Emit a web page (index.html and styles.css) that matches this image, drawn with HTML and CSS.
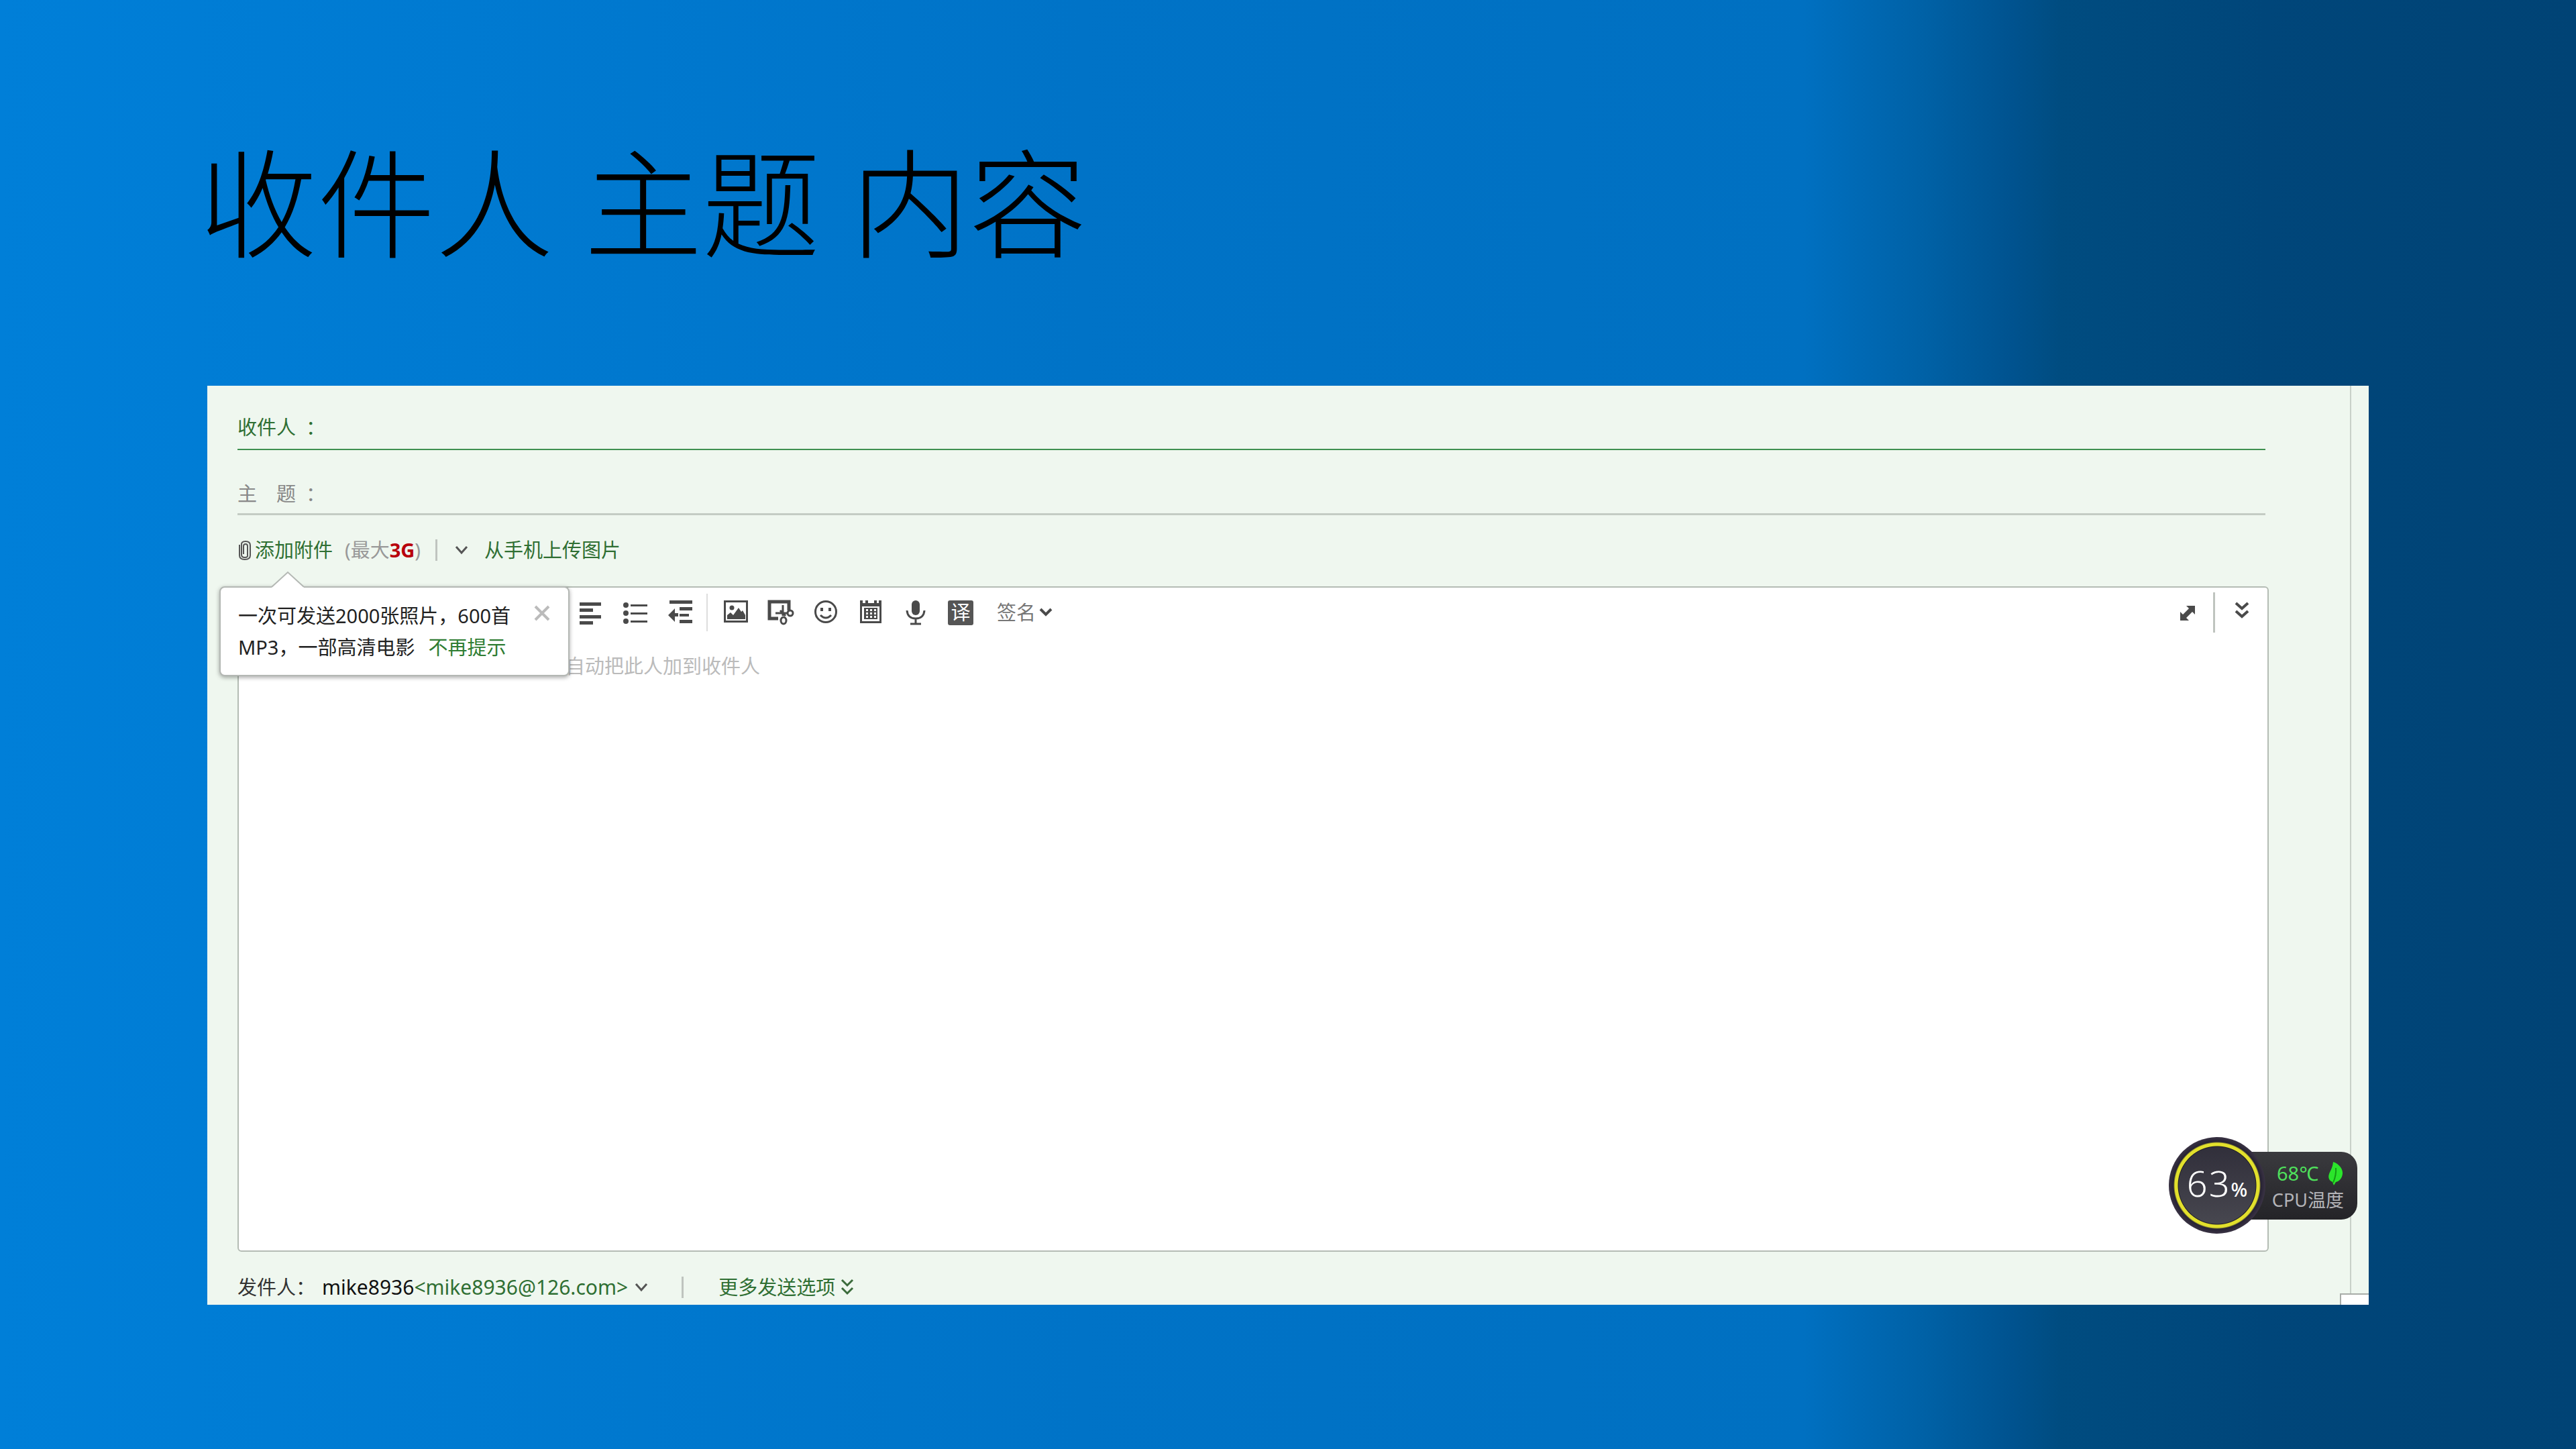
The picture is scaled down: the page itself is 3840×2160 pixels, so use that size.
FILE: index.html
```html
<!DOCTYPE html>
<html lang="zh-CN">
<head>
    <meta charset="UTF-8">
    <meta name="viewport" content="width=device-width, initial-scale=1.0">
    <title>收件人 主题 内容</title>
    <link rel="stylesheet" href="styles.css">
</head>
<body>
    <main class="slide">
        <h1 class="titulo">收件人 主题 内容</h1>

        <section class="panel">
            <form class="compose">
                <div class="field field-to">
                    <label for="to">收件人&nbsp; ：</label>
                    <input id="to" type="text">
                </div>
                <div class="field field-subject">
                    <label for="subject">主　题&nbsp; ：</label>
                    <input id="subject" type="text">
                </div>

                <div class="attach">
                    <button type="button" class="link-btn attach-btn">
                        <svg width="22" height="32" viewBox="0 0 22 32" fill="none" stroke="#555" stroke-width="2"><path d="M3 8v16q0 6 8 6t8-6V9q0-6-7-6T6 9v14q0 4 5 4t4-4V10q0-3-3-3t-3 3v12"/></svg>
                        <span>添加附件</span>
                    </button>
                    <span class="limit">(最大<b>3G</b>)</span>
                    <span class="divider divider-short"></span>
                    <button type="button" class="link-btn" aria-label="更多">
                        <svg width="20" height="14" viewBox="0 0 20 14" fill="none" stroke="#555" stroke-width="3"><path d="M2 2l8 9 8-9"/></svg>
                    </button>
                    <a class="phone" href="#">从手机上传图片</a>

                    <!-- aviso flotante -->
                    <div class="tip">
                        <svg class="tip-arrow" width="50" height="26" viewBox="0 0 50 26"><path d="M1 26V24L25 2l24 22v2z" fill="#fff"/><path d="M1 24L25 2l24 22" fill="none" stroke="#b4b8b4" stroke-width="2"/></svg>
                        <p>一次可发送2000张照片，600首<br>MP3，一部高清电影<a href="#">不再提示</a></p>
                        <button type="button" class="tip-close" aria-label="关闭">
                            <svg width="24" height="24" viewBox="0 0 24 24" stroke="#bbb" stroke-width="4"><path d="M2 2l20 20M22 2L2 22"/></svg>
                        </button>
                    </div>
                </div>

                <div class="editor">
                    <div class="toolbar">
                        <button type="button" aria-label="对齐"><svg viewBox="0 0 40 40" fill="#4a4a4a"><path d="M4 5h32v5H4zM4 14h20v5H4zM4 24h32v5H4zM4 33h20v5H4z"/></svg></button>
                        <button type="button" aria-label="列表"><svg viewBox="0 0 40 40" fill="#4a4a4a"><circle cx="6" cy="9" r="4"/><circle cx="6" cy="21" r="4"/><circle cx="6" cy="33" r="4"/><path d="M13 8h25v3H13zM13 20h25v3H13zM13 32h25v3H13z"/></svg></button>
                        <button type="button" aria-label="缩进"><svg viewBox="0 0 40 40" fill="#4a4a4a"><path d="M4 2h34v5H4zM19 12h19v5H19zM19 22h14v4H19zM19 31h19v5H19zM2 24l10-10v7h5v5h-5v8z"/></svg></button>
                        <span class="divider divider-tool"></span>
                        <button type="button" aria-label="图片"><svg viewBox="0 0 40 40"><path d="M3.500 3.500h33v30h-33z" fill="none" stroke="#4a4a4a" stroke-width="3"/><circle cx="14" cy="13" r="3.500" fill="#4a4a4a"/><path d="M7 30v-6l5-4 4 4 8-11 4 6 2-2 4 7v6z" fill="#4a4a4a"/></svg></button>
                        <button type="button" aria-label="截图"><svg viewBox="0 0 40 40" fill="none" stroke="#4a4a4a"><path d="M16 29H3V4h29v13" stroke-width="5"/><path d="M23 9v16M12 21h18M19 17l8 8" stroke-width="3"/><circle cx="34" cy="21" r="4" stroke-width="3"/><ellipse cx="24" cy="32" rx="4" ry="5" stroke-width="3"/></svg></button>
                        <button type="button" aria-label="表情"><svg viewBox="0 0 40 40" fill="none" stroke="#4a4a4a" stroke-width="3"><circle cx="20" cy="19" r="15.500"/><path d="M12 24q8 8 16 0"/><path d="M14 13v5M26 13v5" stroke-width="4"/></svg></button>
                        <button type="button" aria-label="日历"><svg viewBox="0 0 40 40"><path d="M4 2h4v4h4V2h4v4h9V2h4v4h3V2h4v34H4z" fill="#4a4a4a"/><path d="M7 11h26v22H7z" fill="#fff"/><path d="M10 13h20v17H10z" fill="#4a4a4a"/><path d="M13 15h3v3h-3zM19 15h3v3h-3zM25 15h3v3h-3zM13 20h3v3h-3zM19 20h3v3h-3zM25 20h3v3h-3zM13 25h3v3h-3zM19 25h3v3h-3zM25 25h3v3h-3z" fill="#fff"/></svg></button>
                        <button type="button" aria-label="语音"><svg viewBox="0 0 40 40"><rect x="14" y="2" width="12" height="22" rx="6" fill="#4a4a4a"/><path d="M7 17q1 12 13 12t13-12M20 29v8M12 37h16" fill="none" stroke="#4a4a4a" stroke-width="3"/></svg></button>
                        <button type="button" class="translate" aria-label="翻译"><span>译</span></button>
                        <button type="button" class="signature" aria-haspopup="menu">签名<svg width="20" height="14" viewBox="0 0 20 14" fill="none" stroke="#4a4a4a" stroke-width="4"><path d="M2 2l8 8 8-8"/></svg></button>

                        <button type="button" class="expand" aria-label="全屏"><svg viewBox="0 0 40 40" fill="#4a4a4a"><path d="M18 10h13v13l-4-4-9 9 4 4H9V19l4 4 9-9z"/></svg></button>
                        <span class="divider divider-tall"></span>
                        <button type="button" aria-label="展开"><svg viewBox="0 0 40 40" fill="none" stroke="#4a4a4a" stroke-width="4"><path d="M11 6l9 8 9-8M11 18l9 8 9-8"/></svg></button>
                    </div>
                    <textarea class="content" aria-label="内容" placeholder="自动把此人加到收件人"></textarea>
                </div>

                <div class="sender">
                    <span>发件人：</span>
                    <button type="button" class="link-btn from"><span class="from-name">mike8936</span><span class="from-mail">&lt;mike8936@126.com&gt;</span><svg width="20" height="14" viewBox="0 0 20 14" fill="none" stroke="#555" stroke-width="3"><path d="M2 2l8 9 8-9"/></svg></button>
                    <span class="divider divider-short"></span>
                    <button type="button" class="link-btn more">更多发送选项<svg width="20" height="26" viewBox="0 0 20 26" fill="none" stroke="#3b6b3b" stroke-width="3"><path d="M2 2l8 8 8-8M2 14l8 8 8-8"/></svg></button>
                </div>
            </form>

            <div class="side"></div>
            <div class="corner"></div>

            <!-- medidor -->
            <div class="meter">
                <div class="meter-info">
                    <span class="temp">68℃<svg width="24" height="36" viewBox="0 0 24 36"><path d="M8 1c9 3 15 11 14 18-1 7-5 11-10 12l-3 5-2-5C2 29 0 24 2 19c1-4 5-8 6-18z" fill="#2be52b"/><path d="M12 10q1 10-4 22" fill="none" stroke="#149a14" stroke-width="2"/></svg></span>
                    <span class="cpu">CPU温度</span>
                </div>
                <div class="meter-dial"><span>6</span><span>3</span><small>%</small></div>
            </div>
        </section>
    </main>
</body>
</html>
```

FILE: styles.css
```css
* {
    box-sizing: border-box;
}

body {
    margin: 0;
    font-family: "Noto Sans", "Noto Sans CJK SC", sans-serif;
    font-size: 29px;
    line-height: 44px;
    color: #333;
}

button, input, textarea {
    font: inherit;
    color: inherit;
    background: none;
    border: none;
    padding: 0;
    margin: 0;
    outline: none;
}

button {
    cursor: pointer;
}

svg {
    display: block;
    flex: none;
}

a {
    color: #2f6f33;
    text-decoration: none;
}

.slide {
    min-height: 100vh;
    padding: 175px 297px 0;
    background: linear-gradient(90deg, #007fd8 0%, #007ad1 18%, #0073c7 42%, #0070c1 70%, #0060a4 75%, #005390 78%, #004c80 80%, #00467a 88%, #004375 100%);
}

.titulo {
    margin: 0 0 144px;
    font-family: "Open Sans", "Noto Sans CJK SC", sans-serif;
    font-size: 176px;
    line-height: 256px;
    font-weight: 300;
    color: #000;
}

.panel {
    position: relative;
    margin: 0 12px;
    padding: 40px 149px 4px 45px;
    background: #eff7ef;
}

.field {
    display: flex;
    margin-right: 5px;
}

.field label {
    flex: none;
    margin-right: 16px;
}

.field input {
    flex: 1;
    min-width: 0;
    height: 44px;
}

.field-to {
    padding-bottom: 10px;
    border-bottom: 2px solid #3f9050;
    color: #2f6f33;
}

.field-subject {
    padding: 43px 0 7px;
    border-bottom: 3px solid #c4ccc4;
    color: #888;
}

.attach {
    position: relative;
    display: flex;
    align-items: center;
    padding: 30px 0 32px;
}

.link-btn {
    display: flex;
    align-items: center;
    color: #2f6f33;
}

.attach-btn {
    gap: 4px;
}

.limit {
    margin-left: 18px;
    color: #999;
}

.limit b {
    color: #b8000c;
}

.divider {
    flex: none;
    width: 3px;
    background: #bfc4bf;
}

.divider-short {
    height: 32px;
    margin: 0 26px 0 22px;
}

.phone {
    margin-left: 24px;
}

.tip {
    position: absolute;
    z-index: 2;
    top: 106px;
    left: -27px;
    display: flex;
    width: 522px;
    padding: 18px 27px 18px 26px;
    background: #fff;
    border: 2px solid #b4b8b4;
    border-radius: 8px;
    box-shadow: 0 2px 6px rgba(0, 0, 0, 0.35);
    line-height: 47px;
    color: #222;
}

.tip p {
    flex: 1;
    margin: 0;
    white-space: nowrap;
}

.tip p a {
    margin-left: 20px;
    color: #2f7d33;
}

.tip-arrow {
    position: absolute;
    top: -25px;
    left: 75px;
}

.tip-close {
    align-self: flex-start;
    margin-top: 8px;
}

.editor {
    background: #fff;
    border: 2px solid #b4bcb4;
    border-radius: 6px;
}

.toolbar {
    display: flex;
    align-items: center;
    height: 74px;
    padding: 0 18px 0 504px;
    gap: 27px;
}

.toolbar button svg {
    width: 40px;
    height: 40px;
}

.divider-tool {
    width: 2px;
    height: 56px;
    margin: 0 -5px 0 -8px;
    background: #ddd;
}

.divider-tall {
    height: 60px;
    margin: 0 -7px 0 -9px;
}

.translate {
    display: flex;
    justify-content: center;
    width: 40px;
}

.translate span {
    width: 38px;
    height: 37px;
    border-radius: 3px;
    background: #555;
    color: #fff;
    line-height: 35px;
}

.toolbar .signature {
    display: flex;
    align-items: center;
    gap: 5px;
    margin-left: 7px;
    color: #777;
}

.toolbar .signature svg {
    width: 20px;
    height: 14px;
}

.expand {
    margin-left: auto;
}

.content {
    display: block;
    width: 100%;
    height: 914px;
    padding: 21px 40px 0 487px;
    resize: none;
}

.content::placeholder {
    color: #bbb;
}

.sender {
    display: flex;
    align-items: center;
    padding-top: 31px;
}

.from {
    margin-left: 10px;
    font-size: 30px;
}

.from-name {
    color: #111;
}

.from-mail {
    margin-right: 10px;
}

.sender .divider {
    margin: 0 52px 0 50px;
}

.more {
    gap: 8px;
}

/* linea vertical de la derecha */
.side {
    position: absolute;
    top: 0;
    right: 26px;
    bottom: 16px;
    width: 2px;
    background: #c8d0c8;
}

.corner {
    position: absolute;
    right: 0;
    bottom: 0;
    width: 43px;
    height: 17px;
    background: #fff;
    border: 2px solid #a8aca8;
    border-width: 2px 0 0 2px;
}

.meter {
    position: absolute;
    right: 17px;
    bottom: 106px;
    display: flex;
    align-items: center;
    width: 281px;
    height: 144px;
}

.meter-dial {
    position: absolute;
    left: 0;
    display: flex;
    align-items: baseline;
    justify-content: center;
    gap: 2px;
    width: 144px;
    height: 144px;
    border-radius: 50%;
    background: radial-gradient(circle, transparent 57px, #1e1c26 58px, #e2e02c 59px, #e2e02c 63px, #262233 65px, #3a3344 72px), linear-gradient(#2e2c38, #4a4a52);
    color: #fff;
    font-weight: 300;
    font-size: 54px;
    line-height: 136px;
}

.meter-dial small {
    font-size: 29px;
    font-weight: 500;
}

.meter-info {
    flex: 1;
    height: 101px;
    margin-left: 72px;
    padding: 12px 20px 0 0;
    border-radius: 0 24px 24px 0;
    background: linear-gradient(#3a3a3e, #242428);
    line-height: 40px;
    color: #b4b4b8;
    text-align: right;
}

.temp {
    display: flex;
    align-items: center;
    justify-content: flex-end;
    gap: 14px;
    color: #4fe05c;
}

.cpu {
    display: block;
    font-size: 27px;
    white-space: nowrap;
}
```
